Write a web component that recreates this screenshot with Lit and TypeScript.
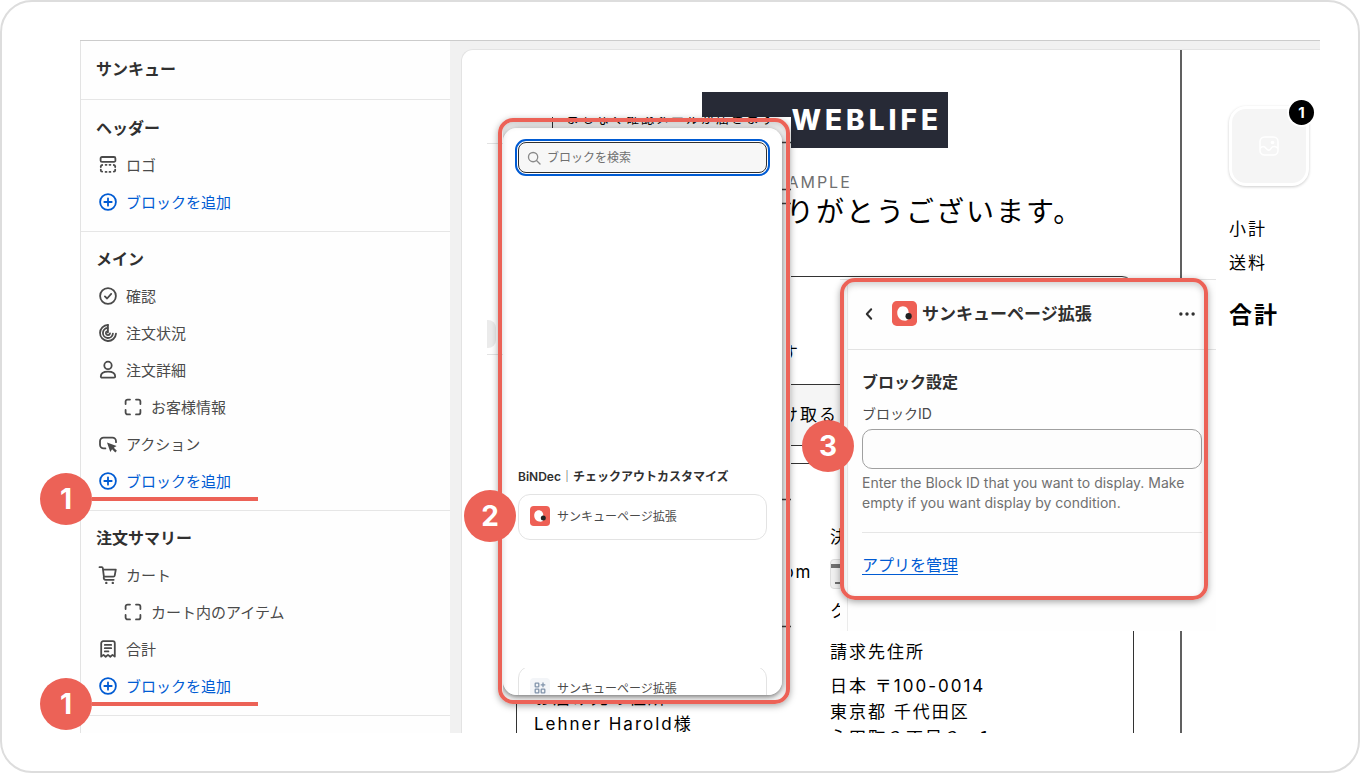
import { LitElement, html, css, svg, nothing } from "lit";
import { customElement, property } from "lit/decorators.js";

const line = (body: unknown) => svg`<g fill="none" stroke="currentColor" stroke-width="1.8" stroke-linecap="round" stroke-linejoin="round">${body}</g>`;

const ICONS: Record<string, unknown> = {
  header: line(svg`
    <rect x="2.600" y="2" width="14.800" height="4.800" rx="1.400"/>
    <path d="M2.800 12V11.400A1.600 1.600 0 0 1 4.200 10M7.600 9.800h.9M11.500 9.800h.9M15.800 10a1.600 1.600 0 0 1 1.400 1.400V12M2.800 14.600v.6a1.600 1.600 0 0 0 1.400 1.500M7.600 16.900h.9M11.500 16.900h.9M15.800 16.700a1.600 1.600 0 0 0 1.400-1.500v-.6"/>`),
  plus: line(svg`<circle cx="10" cy="10" r="7.900"/><path d="M10 6.300v7.400M6.300 10h7.400"/>`),
  check: line(svg`<circle cx="10" cy="10" r="7.900"/><path d="M6.900 10.400l2.200 2.100 4.100-4.600"/>`),
  status: line(svg`
    <path d="M9.900 2A8 8 0 1 0 18 10.600"/>
    <path d="M9.900 2v7.600"/>
    <path d="M9.600 5A5 5 0 1 0 14.900 10.600"/>
    <path d="M9.400 8A2.100 2.100 0 1 0 12 10.500"/>`),
  person: line(svg`<circle cx="10" cy="5.400" r="3.700"/><path d="M2.800 16.500c0-3.100 3.100-4.800 7.200-4.800s7.200 1.700 7.200 4.800c0 .7-.5 1.100-1.200 1.100H4c-.7 0-1.200-.4-1.200-1.100z"/>`),
  corners: line(svg`<path d="M2.600 7V4.600a2 2 0 0 1 2-2H7M13 2.600h2.400a2 2 0 0 1 2 2V7M17.400 13v2.400a2 2 0 0 1-2 2H13M7 17.400H4.600a2 2 0 0 1-2-2V13"/>`),
  action: svg`${line(svg`<path d="M7.400 14.400H5.600A3.600 3.600 0 0 1 2 10.800V7.200a3.600 3.600 0 0 1 3.600-3.600h8.800A3.600 3.600 0 0 1 18 7.200v1"/>`)}
    <path fill="currentColor" d="M9 8.600l9.600 3.300-2.800 1.800 3.100 3.100-1.600 1.700-3.200-3.200-1.800 2.700z"/>`,
  cart: svg`${line(svg`<path d="M1.500 2.200h2.400c.6 0 .8.3.9.9L5.900 11.600h9.600c.7 0 1.100-.4 1.200-1L17.800 4.700H5.100M5.900 11.600c-.6 2 .3 3.200 1.800 3.200h8"/>`)}
    <circle cx="8.300" cy="17.900" r="1.200" fill="currentColor"/><circle cx="14.800" cy="17.900" r="1.200" fill="currentColor"/>`,
  receipt: line(svg`<path d="M3.200 17.600V4.200a2 2 0 0 1 2-2h9.600a2 2 0 0 1 2 2v13.400l-2.300-1.700-2.200 1.900-2.300-1.900-2.300 1.900-2.200-1.900z"/><path d="M6.800 5.900h6.400M6.800 9.200h6.400M6.800 12.400h3.600"/>`),
  search: svg`<g fill="none" stroke="currentColor" stroke-width="1.900" stroke-linecap="round"><circle cx="8.700" cy="8.700" r="6.600"/><path d="M13.600 13.600l5 5"/></g>`,
  back: svg`<path d="M12.200 5.200L7.800 10l4.400 4.800" fill="none" stroke="currentColor" stroke-width="2" stroke-linecap="round" stroke-linejoin="round"/>`,
  dots: svg`<g fill="currentColor"><circle cx="3.200" cy="10" r="1.900"/><circle cx="10" cy="10" r="1.900"/><circle cx="16.800" cy="10" r="1.900"/></g>`,
  image: svg`<g fill="none" stroke="currentColor" stroke-width="1.500" stroke-linejoin="round"><rect x="1" y="1" width="18" height="18" rx="4.500"/><path d="M1 12.500c2-2.600 4.300-2.600 6.200 0 1.800 2.400 3.700 2.300 5-.3 1.300-2 4.600-2.400 6.800.3"/></g><circle cx="13.500" cy="6.500" r="1.800" fill="currentColor"/>`,
  brand: svg`<rect width="20" height="20" rx="3.800" fill="#ee6055"/>
    <path fill="#fff" d="M8.700 4.200c2.800 0 4.600 2.200 4.600 5 0 2.200.6 3.200.2 4.600-.4 1.400-1.600 1.900-2.900 1.900-3.800 0-6.400-2.700-6.400-6.200 0-3 1.800-5.300 4.500-5.300z"/>
    <circle cx="13.300" cy="12.100" r="2.500" fill="#222"/>`,
  app: svg`<rect width="20" height="20" rx="4" fill="#f3f5f8"/>
    <g fill="none" stroke="#8294ab" stroke-width="1.300"><rect x="5.200" y="5.200" width="3.600" height="3.600" rx=".6"/><rect x="5.200" y="11.200" width="3.600" height="3.600" rx=".6"/><rect x="11.200" y="11.200" width="3.600" height="3.600" rx=".6"/><path d="M13 4.600v4.600M10.700 6.900h4.600"/></g>`,
};

@customElement("ui-icon")
class UiIcon extends LitElement {
  static styles = css`
    :host { display: block; width: 20px; height: 20px; flex: none; }
    svg { display: block; width: 100%; height: 100%; }
  `;
  @property() name = "plus";
  render() {
    return html`<svg viewBox="0 0 20 20" aria-hidden="true">${ICONS[this.name]}</svg>`;
  }
}

interface Item { icon: string; label: string; nested?: boolean; add?: boolean; mark?: string }
interface Section { title: string; items: Item[] }

const ADD = "ブロックを追加";
const SECTIONS: Section[] = [
  { title: "ヘッダー", items: [{ icon: "header", label: "ロゴ" }, { icon: "plus", label: ADD, add: true }] },
  {
    title: "メイン",
    items: [
      { icon: "check", label: "確認" },
      { icon: "status", label: "注文状況" },
      { icon: "person", label: "注文詳細" },
      { icon: "corners", label: "お客様情報", nested: true },
      { icon: "action", label: "アクション" },
      { icon: "plus", label: ADD, add: true, mark: "1" },
    ],
  },
  {
    title: "注文サマリー",
    items: [
      { icon: "cart", label: "カート" },
      { icon: "corners", label: "カート内のアイテム", nested: true },
      { icon: "receipt", label: "合計" },
      { icon: "plus", label: ADD, add: true, mark: "1" },
    ],
  },
];

@customElement("block-sidebar")
class BlockSidebar extends LitElement {
  static styles = css`
    :host { display: block; background: #fefefe; border-left: 1px solid #e3e3e3; color: #303030; }
    h1, h2 { margin: 0; font-size: 16px; font-weight: 700; }
    h1 { height: 59px; box-sizing: border-box; display: flex; align-items: center; padding: 0 15px 4px; border-bottom: 1px solid #e6e6e6; }
    h2 { line-height: 37px; padding-left: 15px; }
    section { padding: 10px 0; border-bottom: 1px solid #e6e6e6; }
    section + section { padding-top: 9px; }
    ul { list-style: none; margin: 0; padding: 0; }
    li { position: relative; }
    .row {
      display: flex; align-items: center; gap: 8px; width: 100%; height: 37px; padding: 0 17px 1px;
      border: 0; background: none; font: inherit; font-size: 15px; color: #4a4a4a; text-align: left;
    }
    .row span { padding-bottom: 2px; }
    .nested { padding-left: 42px; }
    .add { color: #005bd3; cursor: pointer; }
    .mark { position: absolute; left: -41px; top: 10px; display: flex; align-items: center; pointer-events: none; }
    .mark::after { content: ""; width: 166px; height: 4px; background: #ec6257; }
    .num {
      width: 52px; height: 52px; border-radius: 50%; background: #ec6257; color: #fff;
      display: grid; place-items: center; font-size: 28px; font-weight: 700; line-height: 1;
    }
  `;
  render() {
    return html`
      <h1>サンキュー</h1>
      ${SECTIONS.map((s) => html`
        <section>
          <h2>${s.title}</h2>
          <ul>
            ${s.items.map((i) => html`
              <li>
                <button type="button" class="row ${i.nested ? "nested" : ""} ${i.add ? "add" : ""}">
                  <ui-icon name=${i.icon}></ui-icon><span>${i.label}</span>
                </button>
                ${i.mark ? html`<span class="mark"><span class="num">${i.mark}</span></span>` : nothing}
              </li>`)}
          </ul>
        </section>`)}
    `;
  }
}

@customElement("checkout-preview")
class CheckoutPreview extends LitElement {
  static styles = css`
    :host {
      display: flex; height: 100%; box-sizing: border-box; overflow: hidden; background: #fff;
      border: 1px solid #e3e3e3; border-width: 1px 0 0 1px; border-radius: 12px 0 0 0;
      font-size: 17px; line-height: 26px; letter-spacing: 2px; color: #000;
    }
    .main { flex: 1; min-width: 0; padding: 42px 46px 0 54px; border-right: 2px solid #606060; }
    .logo {
      width: 246px; height: 56px; box-sizing: border-box; margin: 0 auto; padding-right: 6px; background: #272a36; color: #fff;
      display: flex; align-items: center; justify-content: flex-end;
      font-size: 28px; font-weight: 800; letter-spacing: 4px;
    }
    .intro { margin: 24px 0 0 240px; white-space: nowrap; }
    .number { margin: 0; padding-left: 7px; font-size: 16px; line-height: 20px; color: #707070; }
    h2 { margin: 0; font-size: 28px; line-height: 40px; font-weight: 400; }
    .card { border: 1px solid #333; border-radius: 12px; overflow: hidden; white-space: nowrap; }
    .status { margin-top: 44px; }
    .status p { margin: 0; padding: 63px 17px 18px; }
    .status .optin { padding: 17px; border-top: 1px solid #333; background: #f5f5f5; }
    .info { margin-top: 17px; padding: 60px 17px 20px; display: grid; grid-template-columns: 1fr 1fr; column-gap: 10px; }
    .info p { margin: 0; }
    .mail { padding-top: 35px; }
    .info .ship { margin-top: 100px; }
    .pay {
      display: flex; flex-direction: column; justify-content: space-between; box-sizing: border-box;
      width: 46px; height: 30px; margin: 9px 0; padding: 4px 0 4px; border: 1px solid #ddd; border-radius: 4px; background: #f0f0f0;
    }
    .pay::before { content: ""; height: 4px; background: #707070; }
    .pay::after { content: ""; width: 14px; height: 2px; margin-left: 4px; background: #707070; }
    .info .bill { margin: 15px 0 8px; }
    aside { width: 91px; padding: 56px 0 0 47px; }
    .thumb {
      position: relative; width: 80px; height: 80px; box-sizing: border-box; border: 3px solid #fff; border-radius: 17px;
      background: #f5f5f5; box-shadow: 0 1px 3px rgba(0, 0, 0, 0.2); display: grid; place-items: center; color: #fff;
    }
    .count {
      position: absolute; top: -9px; right: -8px; width: 25px; height: 25px; border-radius: 50%; background: #000; color: #fff;
      box-shadow: 0 0 0 2px #fff; text-align: center; font-size: 15px; line-height: 25px; font-weight: 700; letter-spacing: 0;
    }
    dl { margin: 30px 0 0; display: grid; row-gap: 8px; }
    .total { margin-top: 18px; font-size: 23px; font-weight: 700; }
  `;
  render() {
    return html`
      <div class="main">
        <div class="logo">WEBLIFE</div>
        <div class="intro">
          <p class="number">#SAMPLE</p>
          <h2>ありがとうございます。</h2>
        </div>
        <div class="card status">
          <p>確認メールがまもなく届きます</p>
          <p class="optin">メールで配送の最新情報を受け取る</p>
        </div>
        <div class="card info">
          <div>
            <p class="mail">lehner.harold@example.com</p>
            <p class="ship">お届け先の住所</p>
            <p>Lehner Harold様</p>
          </div>
          <div>
            <p>決済方法</p>
            <div class="pay"></div>
            <p>クレジットカード</p>
            <p class="bill">請求先住所</p>
            <p>日本 〒100-0014</p>
            <p>東京都 千代田区</p>
            <p>永田町２丁目２−１</p>
          </div>
        </div>
      </div>
      <aside>
        <div class="thumb"><ui-icon name="image"></ui-icon><span class="count">1</span></div>
        <dl>
          <dt>小計</dt>
          <dt>送料</dt>
          <dt class="total">合計</dt>
        </dl>
      </aside>
    `;
  }
}

@customElement("block-picker")
class BlockPicker extends LitElement {
  static styles = css`
    :host { display: block; position: relative; overflow: hidden; background: #fff; }
    .behind { position: absolute; inset: 0; width: 100%; height: 100%; }
    .notice { position: absolute; left: 63px; top: -8px; margin: 0; white-space: nowrap; font-size: 13px; line-height: 18px; letter-spacing: 2px; color: #000; }
    .pop {
      position: absolute; inset: 11px 9px 9px 0; box-sizing: border-box; padding: 14px 15px 0; overflow: hidden;
      display: flex; flex-direction: column; border-radius: 14px; background: #fff; color: #303030; font-size: 12px;
    }
    .shade { position: absolute; inset: 11px 9px 9px 0; border-radius: 14px; box-shadow: 0 2px 5px rgba(0, 0, 0, 0.45), 0 0 12px rgba(0, 0, 0, 0.2); }
    .search {
      display: flex; align-items: center; gap: 6px; height: 31px; box-sizing: border-box; padding: 0 8px; flex: none;
      border: 1px solid #303030; border-radius: 8px; background: #f7f7f7; outline: 2px solid #005bd3; outline-offset: 1px; color: #8a8a8a;
    }
    .search ui-icon { width: 14px; height: 14px; }
    .search input { flex: 1; min-width: 0; border: 0; outline: 0; padding: 0; background: none; font: inherit; color: #303030; }
    .search input::placeholder { color: #707070; opacity: 1; }
    h3 { margin: 295px 0 8px; font-size: 12px; line-height: 18px; font-weight: 600; }
    h3 span { font-weight: 400; }
    .item {
      display: flex; align-items: center; gap: 7px; width: 100%; height: 46px; flex: none; padding: 0 11px 2px; box-sizing: border-box;
      border: 1px solid #e3e3e3; border-radius: 12px; background: #fff; font: inherit; color: #4a4a4a; text-align: left;
    }
    .item span { padding-bottom: 1px; }
    .more { margin-top: 128px; flex: 1; min-height: 0; overflow: hidden; }
    .more .item { margin-top: -2px; }
  `;
  render() {
    return html`
      <svg class="behind" aria-hidden="true">
        <path d="M49.500 0v12" stroke="#333"/>
        <path d="M278 25.500h10M278 72.500h10M278 86.500h10M278 382.500h10M278 509.500h10" stroke="#444" stroke-width="1.500"/>
      </svg>
      <p class="notice">まもなく確認メールが届きます</p>
      <div class="shade"></div>
      <div class="pop">
        <label class="search"><ui-icon name="search"></ui-icon><input type="search" aria-label="ブロックを検索" placeholder="ブロックを検索" /></label>
        <h3>BiNDec<span>｜</span>チェックアウトカスタマイズ</h3>
        <button type="button" class="item"><ui-icon name="brand"></ui-icon><span>サンキューページ拡張</span></button>
        <div class="more"><button type="button" class="item"><ui-icon name="app"></ui-icon><span>サンキューページ拡張</span></button></div>
      </div>
    `;
  }
}

@customElement("block-settings")
class BlockSettings extends LitElement {
  static styles = css`
    :host { display: block; background: #fefefe; border-top: 1px solid #e3e3e3; color: #303030; }
    .inner { margin-left: 7px; height: 100%; box-sizing: border-box; border-left: 1px solid #ebebeb; }
    header { display: flex; align-items: center; height: 70px; box-sizing: border-box; padding: 0 18px 2px 11px; border-bottom: 1px solid #e3e3e3; }
    button { display: block; padding: 0; border: 0; background: none; color: inherit; }
    .brand { width: 25px; height: 25px; margin: 0 5px 0 13px; }
    .more { margin-left: auto; margin-right: 2px; }
    .more ui-icon { width: 18px; height: 18px; }
    h2 { margin: 0; font-size: 17px; font-weight: 600; line-height: 24px; }
    .body { padding: 20px 14px 0; }
    h3 { margin: 0; font-size: 16px; line-height: 24px; font-weight: 600; }
    label { display: block; margin: 10px 0 5px; font-size: 14px; line-height: 20px; color: #4a4a4a; }
    input { display: block; width: 100%; height: 40px; box-sizing: border-box; padding: 0 12px; border: 1px solid #a0a0a0; border-radius: 10px; background: #fdfdfd; font: inherit; }
    .help { margin: 4px 0 19px; font-size: 14px; line-height: 20px; color: #707070; }
    .foot { padding-top: 20px; border-top: 1px solid #e6e6e6; }
    a { font-size: 16px; line-height: 24px; color: #005bd3; text-underline-offset: 3px; }
  `;
  render() {
    return html`
      <div class="inner">
        <header>
          <button type="button" aria-label="戻る"><ui-icon name="back"></ui-icon></button>
          <ui-icon class="brand" name="brand"></ui-icon>
          <h2>サンキューページ拡張</h2>
          <button type="button" class="more" aria-label="その他"><ui-icon name="dots"></ui-icon></button>
        </header>
        <div class="body">
          <h3>ブロック設定</h3>
          <label for="block-id">ブロックID</label>
          <input id="block-id" type="text" aria-describedby="block-help" />
          <p class="help" id="block-help">Enter the Block ID that you want to display. Make empty if you want display by condition.</p>
          <div class="foot"><a href="#apps">アプリを管理</a></div>
        </div>
      </div>
    `;
  }
}

@customElement("app-root")
class AppRoot extends LitElement {
  static styles = css`
    :host { display: block; background: #fff; font-family: Inter, "Noto Sans CJK JP", sans-serif; }
    .frame { box-sizing: border-box; height: 100vh; padding: 38px 38px 38px 78px; border: 2px solid #ddd; border-radius: 32px; }
    .editor { display: grid; grid-template-columns: 370px minmax(0, 1fr); height: 100%; box-sizing: border-box; border-top: 1px solid #ccc; }
    .canvas { position: relative; min-height: 0; overflow: hidden; box-sizing: border-box; padding: 8px 0 0 11px; background: #f1f1f1; }
    .edge { position: absolute; left: 37px; top: 102px; width: 16px; height: 212px; box-sizing: border-box; border: solid #e3e3e3; border-width: 1px 0; }
    .edge::after { content: ""; position: absolute; left: 0; bottom: 6px; width: 9px; height: 28px; border-radius: 0 8px 8px 0; background: #ebebeb; }
    .picker { position: absolute; left: 53px; top: 76px; width: 288px; height: 587px; }
    .settings { position: absolute; left: 390px; top: 238px; width: 376px; height: 352px; box-sizing: border-box; }
    .ring {
      position: absolute; box-sizing: border-box; border: 4px solid #ec6257; border-radius: 15px; pointer-events: none;
      box-shadow: 0 2px 7px rgba(0, 0, 0, 0.35), inset 0 3px 6px rgba(0, 0, 0, 0.18);
    }
    .ring-picker { left: 48px; top: 77px; width: 292px; height: 586px; }
    .ring-settings { left: 390px; top: 237px; width: 368px; height: 322px; }
    .num {
      position: absolute; width: 52px; height: 52px; border-radius: 50%; background: #ec6257; color: #fff;
      display: grid; place-items: center; font-size: 28px; font-weight: 700; line-height: 1;
    }
    .two { left: 14px; top: 449px; }
    .three { left: 352px; top: 379px; }
  `;
  render() {
    return html`
      <div class="frame">
        <div class="editor">
          <block-sidebar></block-sidebar>
          <div class="canvas">
            <checkout-preview></checkout-preview>
            <div class="edge"></div>
            <block-picker class="picker"></block-picker>
            <div class="ring ring-picker"></div>
            <block-settings class="settings"></block-settings>
            <div class="ring ring-settings"></div>
            <span class="num two">2</span>
            <span class="num three">3</span>
          </div>
        </div>
      </div>
    `;
  }
}
